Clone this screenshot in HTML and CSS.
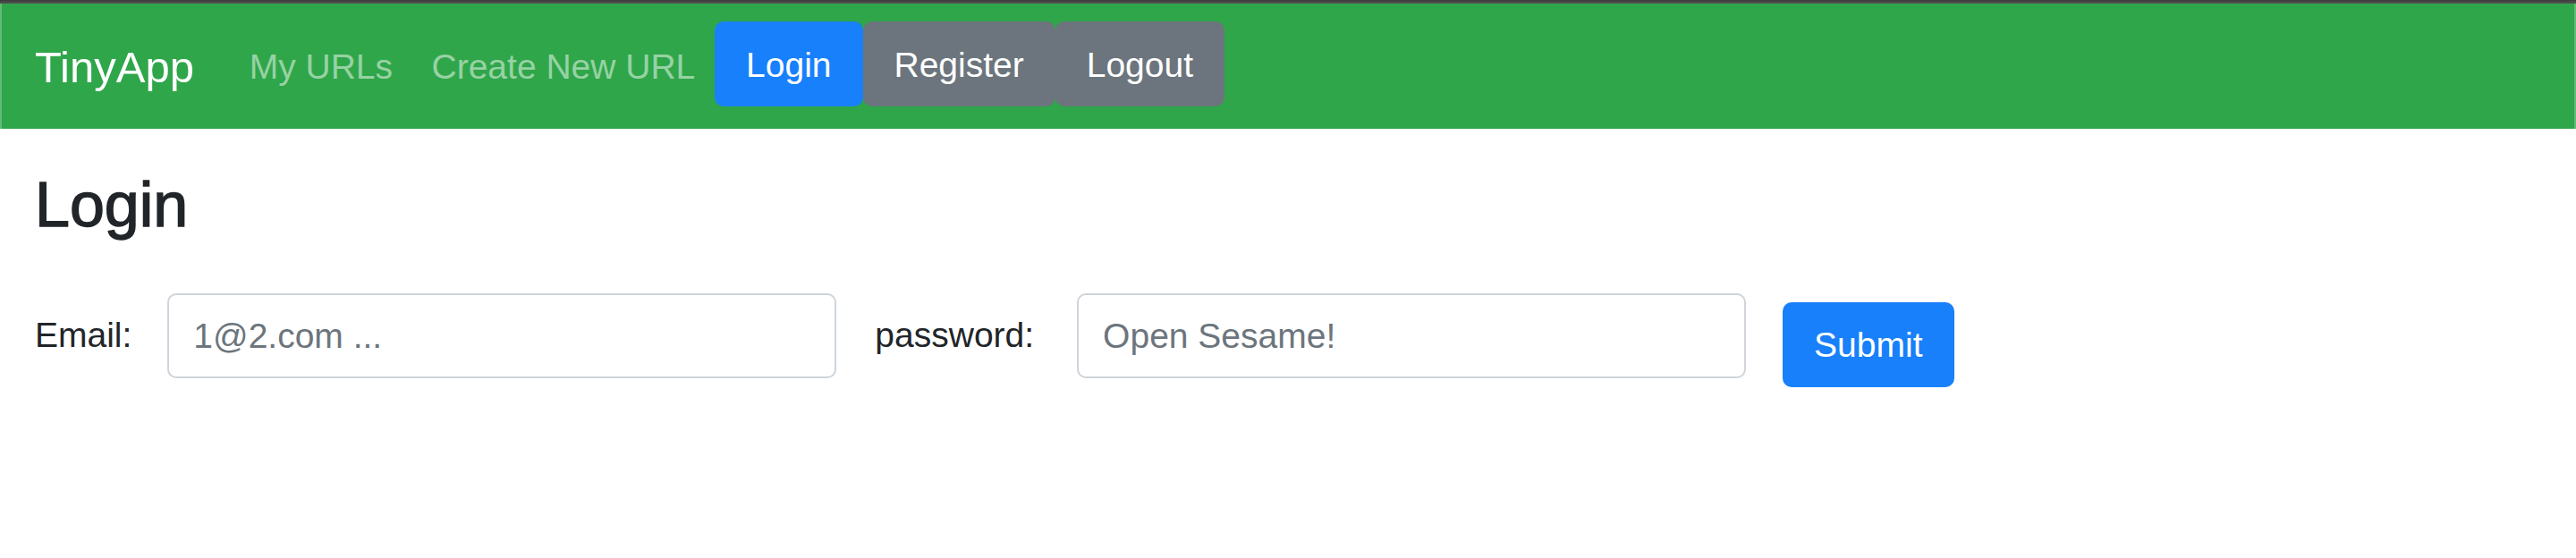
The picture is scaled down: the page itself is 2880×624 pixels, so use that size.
FILE: index.html
```html
<!DOCTYPE html>
<html lang="en">
<head>
<meta charset="utf-8">
<title>TinyApp - Login</title>
<link rel="stylesheet" href="styles.css">
</head>
<body>
<div class="topline"></div>
<nav class="navbar">
  <a class="brand" href="#">TinyApp</a>
  <a class="nav-link" href="#">My URLs</a>
  <a class="nav-link" href="#">Create New URL</a>
  <div class="nav-buttons">
    <a class="btn btn-primary" href="#">Login</a>
    <a class="btn btn-secondary" href="#">Register</a>
    <a class="btn btn-secondary" href="#">Logout</a>
  </div>
</nav>
<main class="main">
  <h1 class="title">Login</h1>
  <form class="login-form">
    <label class="field-label" for="email">Email:</label>
    <input class="field" id="email" type="text" placeholder="1@2.com ...">
    <label class="field-label field-label-wide" for="password">password:</label>
    <input class="field" id="password" type="password" placeholder="Open Sesame!">
    <button class="btn btn-primary btn-submit" type="submit">Submit</button>
  </form>
</main>
</body>
</html>
```

FILE: styles.css
```css
* { box-sizing: border-box; }

body {
  margin: 0;
  background: #ffffff;
  font-family: "Liberation Sans", Arial, sans-serif;
  color: #212529;
}

.topline {
  height: 4px;
  background: linear-gradient(#3a3a3a, #555555);
}

.navbar {
  display: flex;
  align-items: center;
  height: 140px;
  padding: 0 37px;
  background: #2fa64a;
  border-left: 2px solid #62bb74;
  border-right: 2px solid #62bb74;
}

.brand {
  font-size: 49px;
  line-height: 1;
  color: #ffffff;
  text-decoration: none;
  margin-right: 40px;
  margin-top: 2px;
}

.nav-link {
  font-size: 39px;
  line-height: 1;
  color: rgba(255, 255, 255, 0.5);
  text-decoration: none;
  padding: 0 21.75px;
}

.nav-buttons {
  display: flex;
  margin-bottom: 5px;
}

.btn {
  display: inline-flex;
  align-items: center;
  justify-content: center;
  height: 95px;
  padding: 2px 35px 0;
  border: none;
  border-radius: 10px;
  font-family: "Liberation Sans", Arial, sans-serif;
  font-size: 39px;
  line-height: 1;
  color: #ffffff;
  text-decoration: none;
}

.btn-primary { background: #1880fb; }
.btn-secondary { background: #6c757d; }

.main {
  padding: 0 39px;
}

.title {
  margin: 43px 0 0;
  font-size: 70px;
  line-height: 1.2;
  font-weight: 400;
  -webkit-text-stroke: 1.4px #212529;
  color: #212529;
}

.login-form {
  display: flex;
  align-items: center;
  margin-top: 47px;
}

.field-label {
  font-size: 39px;
  line-height: 1.5;
  color: #212529;
  margin-right: 40px;
}

.field-label-wide {
  margin-left: 43px;
  margin-right: 48px;
}

.field {
  width: 748px;
  height: 95px;
  padding: 0 27px;
  border: 2px solid #ced4da;
  border-radius: 10px;
  font-family: "Liberation Sans", Arial, sans-serif;
  font-size: 39px;
  color: #495057;
  background: #ffffff;
  outline: none;
}

.field::placeholder {
  color: #6c757d;
  opacity: 1;
}

.btn-submit {
  margin-left: 41px;
  margin-top: 20px;
  padding-top: 0;
}
```
